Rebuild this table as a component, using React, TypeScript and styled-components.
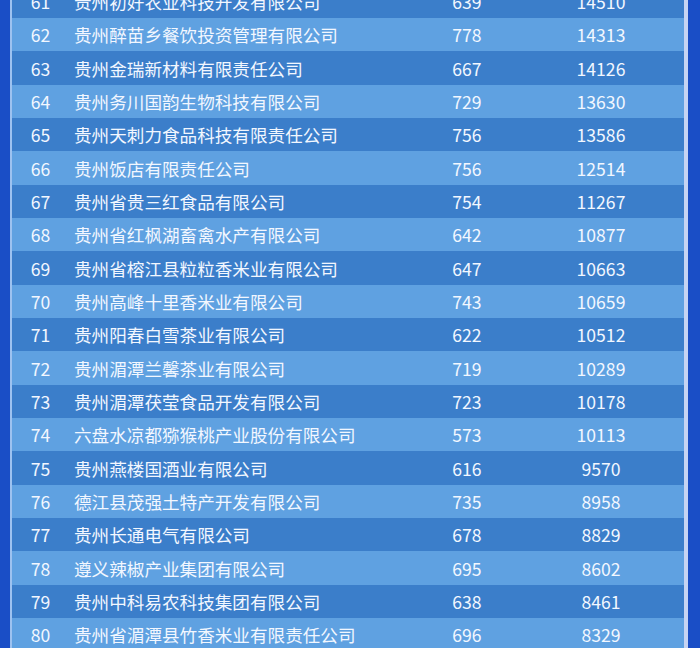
import React from 'react';
import styled, {createGlobalStyle} from 'styled-components';

const GlobalStyle = createGlobalStyle`
    html, body {
        margin: 0;
        padding: 0;
        width: 700px;
        height: 648px;
        overflow: hidden;
        background: #1a4ec6;
    }
`;

const Page = styled.div`
    display: flex;
    width: 700px;
    height: 648px;
    overflow: hidden;
    background: #1a4ec6;
    font-family: 'Noto Sans CJK SC', 'Noto Sans', sans-serif;
`;

const Frame = styled.div`
    margin: -15.333px 12px 0 10px;
    width: 672px;
    border-left: 2px solid #9dc2f0;
    border-right: 4px solid #c6d4f3;
`;

const Row = styled.div<{$light: boolean}>`
    display: grid;
    grid-template-columns: 57px 347px 102px 166px;
    height: 33.333px;
    align-items: center;
    background: ${p => (p.$light ? '#5fa1e1' : '#3b7eca')};
    color: #f2f7ff;
    font-size: 17.6px;
    line-height: 1;
`;

const Cell = styled.div<{$align?: 'left' | 'center'}>`
    text-align: ${p => p.$align ?? 'center'};
    padding-left: ${p => (p.$align === 'left' ? '5px' : '0')};
    white-space: nowrap;
    padding-top: 1px;
`;

type Company = [number, string, number, number];

const companies: Company[] = [
    [61, '贵州初好农业科技开发有限公司', 639, 14510],
    [62, '贵州醉苗乡餐饮投资管理有限公司', 778, 14313],
    [63, '贵州金瑞新材料有限责任公司', 667, 14126],
    [64, '贵州务川国韵生物科技有限公司', 729, 13630],
    [65, '贵州天刺力食品科技有限责任公司', 756, 13586],
    [66, '贵州饭店有限责任公司', 756, 12514],
    [67, '贵州省贵三红食品有限公司', 754, 11267],
    [68, '贵州省红枫湖畜禽水产有限公司', 642, 10877],
    [69, '贵州省榕江县粒粒香米业有限公司', 647, 10663],
    [70, '贵州高峰十里香米业有限公司', 743, 10659],
    [71, '贵州阳春白雪茶业有限公司', 622, 10512],
    [72, '贵州湄潭兰馨茶业有限公司', 719, 10289],
    [73, '贵州湄潭茯莹食品开发有限公司', 723, 10178],
    [74, '六盘水凉都猕猴桃产业股份有限公司', 573, 10113],
    [75, '贵州燕楼国酒业有限公司', 616, 9570],
    [76, '德江县茂强土特产开发有限公司', 735, 8958],
    [77, '贵州长通电气有限公司', 678, 8829],
    [78, '遵义辣椒产业集团有限公司', 695, 8602],
    [79, '贵州中科易农科技集团有限公司', 638, 8461],
    [80, '贵州省湄潭县竹香米业有限责任公司', 696, 8329],
];

export default function App() {
    return (
        <>
            <GlobalStyle />
            <Page>
                <Frame>
                    {companies.map(([rank, name, score, total]) => (
                        <Row key={rank} $light={rank % 2 === 0}>
                            <Cell>{rank}</Cell>
                            <Cell $align="left">{name}</Cell>
                            <Cell>{score}</Cell>
                            <Cell>{total}</Cell>
                        </Row>
                    ))}
                </Frame>
            </Page>
        </>
    );
}
